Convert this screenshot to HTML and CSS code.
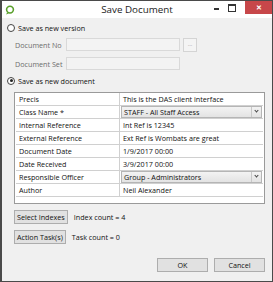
FILE: index.html
```html
<!DOCTYPE html>
<html lang="en">
<head>
    <meta charset="UTF-8">
    <title>Save Document</title>
    <link rel="stylesheet" href="styles.css">
</head>
<body>
    <div class="window">
        <!-- title bar -->
        <div class="titlebar">
            <svg class="app-icon" width="10" height="10" viewBox="0 0 10 10">
                <circle cx="5" cy="4.6" r="3.4" fill="none" stroke="#5aa02c" stroke-width="1.6"/>
                <path d="M2 7.5 L1.2 9.4 L3.6 8.4 Z" fill="#5aa02c"/>
            </svg>
            <div class="title">Save Document</div>
            <div class="controls">
                <span class="ctl min"></span>
                <span class="ctl max"></span>
                <span class="ctl close">&#x2715;</span>
            </div>
        </div>

        <div class="content">
            <label class="radio-row">
                <span class="radio"></span> Save as new version
            </label>

            <div class="field-row">
                <span class="field-label">Document No</span>
                <span class="input disabled"></span>
                <span class="browse">...</span>
            </div>
            <div class="field-row">
                <span class="field-label">Document Set</span>
                <span class="input disabled"></span>
            </div>

            <label class="radio-row second">
                <span class="radio checked"></span> Save as new document
            </label>

            <div class="grid">
                <div class="row"><div class="cell key">Precis</div><div class="cell">This is the DAS client interface</div></div>
                <div class="row"><div class="cell key">Class Name *</div><div class="cell combo">STAFF - All Staff Access<span class="arrow"></span></div></div>
                <div class="row"><div class="cell key">Internal Reference</div><div class="cell">Int Ref is 12345</div></div>
                <div class="row"><div class="cell key">External Reference</div><div class="cell">Ext Ref is Wombats are great</div></div>
                <div class="row"><div class="cell key">Document Date</div><div class="cell">1/9/2017 00:00</div></div>
                <div class="row"><div class="cell key">Date Received</div><div class="cell">3/9/2017 00:00</div></div>
                <div class="row"><div class="cell key">Responsible Officer</div><div class="cell combo">Group - Administrators<span class="arrow"></span></div></div>
                <div class="row"><div class="cell key">Author</div><div class="cell">Neil Alexander</div></div>
            </div>

            <div class="action-row">
                <button class="btn">Select Indexes</button>
                <span class="count">Index count = 4</span>
            </div>
            <div class="action-row">
                <button class="btn">Action Task(s)</button>
                <span class="count">Task count = 0</span>
            </div>

            <div class="footer">
                <button class="btn wide">OK</button>
                <button class="btn wide">Cancel</button>
            </div>
        </div>
    </div>
</body>
</html>
```

FILE: styles.css
```css
body {
    margin: 0;
    font-family: "Open Sans", "Noto Sans", sans-serif;
    font-size: 7.2px;
    color: #111;
}

.window {
    width: 273px;
    height: 282px;
    box-sizing: border-box;
    border: 1px solid #4a4a4a;
    border-left-width: 2px;
    background: #f0f0f0;
}

.titlebar {
    height: 17px;
    background: #fff;
    display: flex;
    align-items: flex-start;
    position: relative;
}

.app-icon {
    margin: 4px 0 0 3px;
}

.title {
    position: absolute;
    left: 0;
    right: 0;
    top: 2px;
    text-align: center;
    font-size: 9.8px;
    color: #222;
}

.controls {
    margin-left: auto;
    display: flex;
    align-items: flex-start;
}

.ctl {
    display: block;
}

.min {
    width: 5px;
    height: 2px;
    background: #333;
    margin: 7px 9px 0 0;
}

.max {
    width: 6px;
    height: 5px;
    border: 1px solid #333;
    border-top-width: 2px;
    margin: 3px 9px 0 0;
}

.close {
    width: 27px;
    height: 13px;
    background: #c7474a;
    color: #fff;
    font-size: 7px;
    line-height: 13px;
    text-align: center;
    font-weight: bold;
}

.content {
    padding: 5px 7px 0 5px;
}

.radio-row {
    display: flex;
    align-items: center;
    gap: 3px;
    height: 9px;
}

.radio-row.second {
    margin-top: 6px;
}

.radio {
    width: 8px;
    height: 8px;
    box-sizing: border-box;
    border: 1px solid #444;
    border-radius: 50%;
    background: #fff;
    position: relative;
}

.radio.checked::after {
    content: "";
    position: absolute;
    left: 1.5px;
    top: 1.5px;
    width: 3px;
    height: 3px;
    border-radius: 50%;
    background: #222;
}

.field-row {
    display: flex;
    align-items: center;
    margin-top: 6px;
    height: 13px;
}

.field-row + .field-row {
    margin-top: 6px;
}

.field-label {
    width: 51px;
    padding-left: 8px;
    color: #6d6d6d;
}

.input {
    width: 114px;
    height: 13px;
    box-sizing: border-box;
    border: 1px solid #d9d9d9;
    background: #f3f3f3;
}

.browse {
    width: 14px;
    height: 14px;
    box-sizing: border-box;
    margin-left: 3px;
    border: 1px solid #d4d4d4;
    background: #f4f4f4;
    color: #9a9a9a;
    font-size: 6px;
    text-align: center;
    line-height: 10px;
}

.grid {
    margin: 7px 0 0 7px;
    height: 112px;
    box-sizing: border-box;
    border: 1px solid #9a9a9a;
    background: #fff;
    padding: 0 1px 0 1px;
}

.row {
    display: flex;
    height: 13px;
    box-sizing: border-box;
    border-bottom: 1px solid #d0d0d0;
}

.cell {
    padding-left: 3px;
    line-height: 12px;
    white-space: nowrap;
}

.cell.key {
    width: 100px;
    border-right: 1px solid #d0d0d0;
}

.cell.combo {
    flex: 1;
    position: relative;
    margin: 0 1px 0 1px;
    background: linear-gradient(#f3f3f3, #e3e3e3);
    border: 1px solid #b5b5b5;
    line-height: 10px;
    padding-left: 2px;
}

.arrow {
    position: absolute;
    right: 0;
    top: 0;
    bottom: 0;
    width: 9px;
    border-left: 1px solid #c8c8c8;
}

.arrow::after {
    content: "";
    position: absolute;
    left: 2.5px;
    top: 2px;
    width: 2px;
    height: 2px;
    border-right: 1px solid #444;
    border-bottom: 1px solid #444;
    transform: rotate(45deg);
}

.action-row {
    display: flex;
    align-items: flex-start;
    gap: 6px;
    margin: 6px 0 0 7px;
}

.action-row + .action-row {
    margin-top: 6px;
}

.count {
    margin-top: 2px;
}

.btn {
    font-family: inherit;
    font-size: 7.2px;
    color: #111;
    height: 14px;
    padding: 0 2px;
    box-sizing: border-box;
    border: 1px solid #adadad;
    background: #e1e1e1;
    border-radius: 0;
}

.footer {
    display: flex;
    justify-content: flex-end;
    gap: 6px;
    margin-top: 14px;
}

.btn.wide {
    width: 51px;
}
```
